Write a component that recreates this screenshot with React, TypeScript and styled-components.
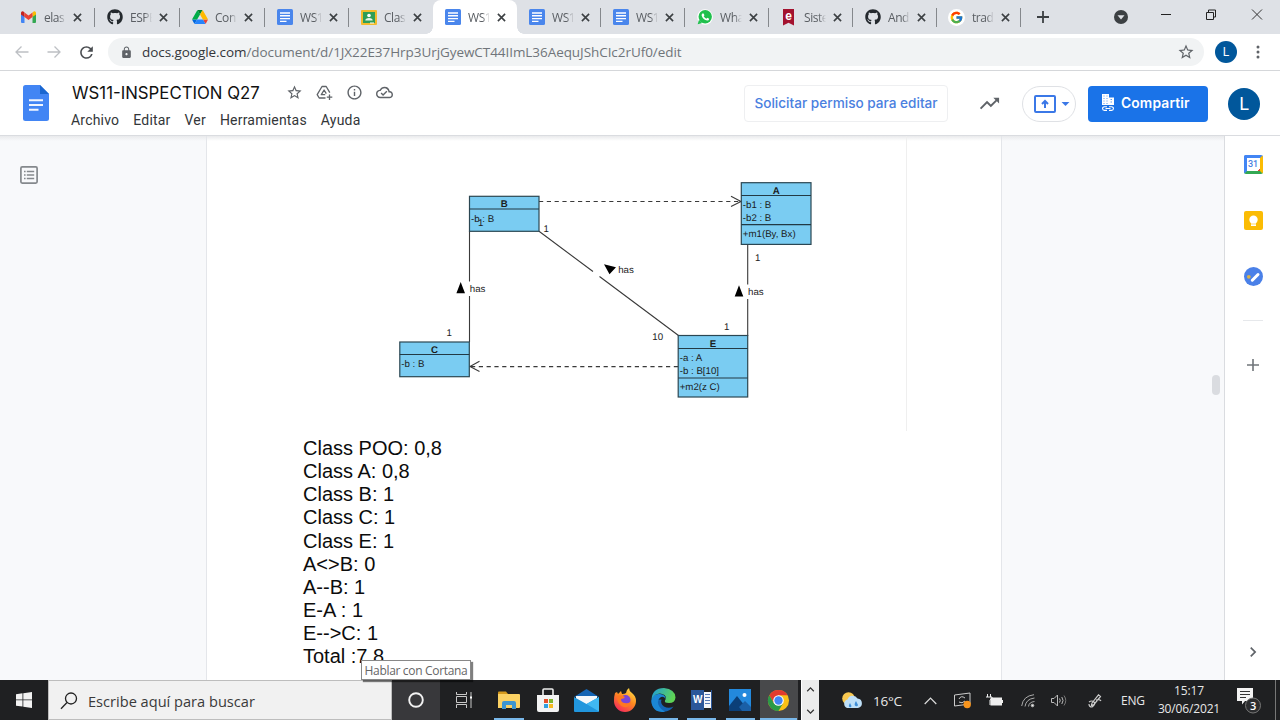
import React from "react";
import styled, { createGlobalStyle } from "styled-components";
import {
  MdLock, MdRefresh, MdStarBorder, MdInfoOutline, MdTrendingUp,
  MdArrowDropDown, MdOutlineCloudDone,
  MdChevronRight, MdKeyboardArrowUp, MdKeyboardArrowDown,
} from "react-icons/md";
import { FaGithub } from "react-icons/fa";
import { FcGoogle } from "react-icons/fc";

const Global = createGlobalStyle`
  * { box-sizing: border-box; }
  html, body { margin: 0; padding: 0; background: #fff; overflow: hidden; }
  svg { display: block; flex: none; }
`;

const SEGOE = `"Open Sans", "Noto Sans", sans-serif`;
const GOOGLE = `Inter, Roboto, sans-serif`;

const Screen = styled.div`
  width: 1280px;
  height: 720px;
  display: flex;
  flex-direction: column;
  overflow: hidden;
  font-family: ${SEGOE};
`;

/* ---------- tab strip ---------- */
const TabStrip = styled.div`
  height: 34px;
  flex: none;
  display: flex;
  align-items: stretch;
  padding-left: 9px;
  background: #dee1e6;
`;

const TabItem = styled.div<{ $w: number; $active?: boolean; $line?: boolean }>`
  width: ${(p) => p.$w}px;
  display: flex;
  align-items: center;
  padding-left: 11px;
  position: relative;
  background: ${(p) => (p.$active ? "#fff" : "transparent")};
  border-radius: 8px 8px 0 0;
  &::after {
    content: "";
    position: absolute;
    right: 0;
    top: 8px;
    width: 1px;
    height: 19px;
    background: ${(p) => (p.$line ? "#85888c" : "transparent")};
  }
`;

const TabFoot = styled.i<{ $side: "left" | "right" }>`
  position: absolute;
  bottom: 0;
  ${(p) => p.$side}: -7px;
  width: 7px;
  height: 7px;
  background: radial-gradient(
    circle at ${(p) => (p.$side === "left" ? "0 0" : "100% 0")},
    transparent 6.5px,
    #fff 7px
  );
`;

const TabIcon = styled.span`
  width: 17px;
  height: 17px;
  display: flex;
  align-items: center;
  justify-content: center;
`;

const TabLabel = styled.span`
  width: 22px;
  margin-left: 7px;
  overflow: hidden;
  white-space: nowrap;
  font-size: 12px;
  line-height: 17px;
  letter-spacing: -0.45px;
  color: #5a5e63;
  mask-image: linear-gradient(90deg, #000 65%, transparent 100%);
`;

const TabClose = styled.svg`
  margin-left: 7px;
`;

const StripTools = styled.div`
  flex: 1;
  display: flex;
  align-items: flex-start;
`;

/* ---------- address bar ---------- */
const AddressRow = styled.div`
  height: 37px;
  flex: none;
  display: flex;
  align-items: center;
  padding-left: 14px;
  border-bottom: 1px solid #d5d7da;
`;

const NavButtons = styled.div`
  width: 94px;
  display: flex;
  align-items: center;
  gap: 15.5px;
`;

const Omnibox = styled.div`
  width: 1096px;
  height: 28px;
  border-radius: 14px;
  background: #f1f3f4;
  display: flex;
  align-items: center;
  padding: 0 9px 0 12px;
`;

const Url = styled.div`
  flex: 1;
  margin-left: 9px;
  font-size: 13.5px;
  line-height: 20px;
  letter-spacing: -0.06px;
  color: #70757a;
  b { font-weight: 400; color: #33363a; }
`;

const Avatar = styled.div<{ $size: number; $font: number; $ml: number }>`
  width: ${(p) => p.$size}px;
  height: ${(p) => p.$size}px;
  margin-left: ${(p) => p.$ml}px;
  border-radius: 50%;
  background: #01579b;
  color: #fff;
  font: 400 ${(p) => p.$font}px/${(p) => p.$size}px Roboto, sans-serif;
  text-align: center;
`;

/* ---------- docs header ---------- */
const DocsHeader = styled.header`
  height: 65px;
  flex: none;
  display: flex;
  padding-left: 23px;
  border-bottom: 1px solid #dadce0;
`;

const DocsLogo = styled.svg`
  margin-top: 14px;
`;

const TitleBlock = styled.div`
  width: 673px;
  margin-left: 22px;
  padding-top: 10px;
`;

const TitleRow = styled.div`
  display: flex;
  align-items: center;
  height: 24px;
`;

const DocTitle = styled.div`
  width: 215px;
  padding-left: 1px;
  font: 400 16.8px/24px ${GOOGLE};
  white-space: nowrap;
  color: #111;
`;

const TitleIcons = styled.div`
  display: flex;
  gap: 13px;
  margin-bottom: 2px;
  color: #5f6368;
`;

const MenuRow = styled.nav`
  display: flex;
  gap: 14px;
  margin-top: 6px;
  font: 400 14px/18px Roboto, sans-serif;
  letter-spacing: 0.2px;
  color: #333639;
`;

const RequestButton = styled.div`
  width: 204px;
  height: 37px;
  margin-top: 14px;
  border: 1px solid #eeeff1;
  border-radius: 4px;
  font: 500 13.6px/35px ${GOOGLE};
  text-align: center;
  white-space: nowrap;
  color: #4a80e0;
`;

const HeaderActions = styled.div`
  flex: 1;
  display: flex;
  align-items: center;
  height: 37px;
  margin-top: 14px;
  padding-left: 30px;
`;

const PresentButton = styled.div`
  width: 54px;
  height: 36px;
  margin-left: 21px;
  border: 1px solid #dfe1e5;
  border-radius: 18px;
  display: flex;
  align-items: center;
  padding-left: 11px;
  color: #3b78e7;
`;

const ShareButton = styled.div`
  width: 120px;
  height: 36px;
  margin-left: 12px;
  border-radius: 4px;
  background: #1a73e8;
  color: #fff;
  display: flex;
  align-items: center;
  padding: 0 0 1px 13px;
  gap: 6px;
  font: 600 13.8px/20px ${GOOGLE};
  letter-spacing: 0.15px;
  white-space: nowrap;
`;

/* ---------- workspace ---------- */
const Workspace = styled.main`
  flex: 1;
  min-height: 0;
  display: flex;
  background: #f8f9fb;
`;

const HEADER_SHADE = "linear-gradient(#e9eaec, rgba(240, 241, 243, 0)) top / 100% 5px no-repeat";

const OutlineGutter = styled.div`
  width: 206px;
  padding: 30px 0 0 20px;
  background: ${HEADER_SHADE};
`;

const Page = styled.article`
  width: 796px;
  background: ${HEADER_SHADE}, #fff;
  border: solid #e4e6ea;
  border-width: 0 1px;
  overflow: hidden;
`;

const Figure = styled.div`
  width: 700px;
  height: 295px;
  border-right: 1px solid #efefef;
`;

const Notes = styled.div`
  padding: 6.3px 0 0 96px;
  font: 400 20px/23.07px "Liberation Sans", Arial, sans-serif;
  color: #0c0c0c;
`;

const ScrollGutter = styled.div`
  flex: 1;
  display: flex;
  justify-content: flex-end;
  padding: 239px 4px 0 0;
  background: ${HEADER_SHADE};
`;

const Thumb = styled.div`
  width: 8px;
  height: 20px;
  border-radius: 4px;
  background: #dadce0;
`;

const SidePanel = styled.aside`
  width: 56px;
  border-left: 1px solid #dadce0;
  background: #fff;
  display: flex;
  flex-direction: column;
  align-items: center;
  padding: 18px 0 0 1px;
`;

const PanelIcon = styled.div<{ $gap?: number; $top?: string }>`
  height: 20px;
  margin: ${(p) => p.$top || 0} 0 ${(p) => p.$gap || 0}px;
  display: flex;
  align-items: center;
`;

const PanelRule = styled.div`
  width: 20px;
  height: 1px;
  background: #e6e8eb;
`;

/* ---------- taskbar ---------- */
const Taskbar = styled.footer`
  height: 40px;
  flex: none;
  display: flex;
  background: #1f2022;
  color: #eee;
  position: relative;
`;

const StartButton = styled.div`
  width: 48px;
  display: flex;
  align-items: center;
  padding-left: 16px;
`;

const SearchBox = styled.div`
  width: 344px;
  background: #f1f1f1;
  border: 1px solid #bdbdbd;
  display: flex;
  align-items: center;
  padding: 2px 0 0 11px;
  gap: 10px;
  font-size: 14.6px;
  line-height: 20px;
  color: #3a3a3a;
`;

const CortanaButton = styled.div`
  width: 48px;
  background: #38383b;
  display: flex;
  align-items: center;
  justify-content: center;
`;

const TaskViewButton = styled.div`
  width: 50px;
  display: flex;
  align-items: center;
  justify-content: center;
  padding-right: 2px;
`;

const AppButton = styled.div<{ $on?: boolean; $bar?: number }>`
  width: 38.5px;
  display: flex;
  align-items: center;
  justify-content: center;
  background: linear-gradient(#79b8ea, #79b8ea) center bottom / ${(p) => p.$bar || 0}px 2px no-repeat
    ${(p) => (p.$on ? ", #48494b" : "")};
`;

const TaskScroll = styled.div`
  width: 18px;
  margin-left: 3px;
  background: #ececec;
  border-left: 1px solid #fff;
  color: #333;
  display: flex;
  flex-direction: column;
  align-items: center;
  justify-content: space-between;
  padding: 2px 0 1px;
`;

const Tray = styled.div`
  flex: 1;
  display: flex;
  align-items: center;
  padding-left: 23px;
  font-size: 13.5px;
  letter-spacing: -0.2px;
  color: #e8e8e8;
`;

const TrayCell = styled.div<{ $w: number; $font?: number }>`
  width: ${(p) => p.$w}px;
  flex: none;
  display: flex;
  align-items: center;
  white-space: nowrap;
  padding-top: 1px;
  ${(p) => (p.$font ? `font-size: ${p.$font}px;` : "")}
`;

const Clock = styled.div`
  width: 66px;
  flex: none;
  text-align: center;
  font-size: 12px;
  letter-spacing: -0.15px;
  line-height: 18.5px;
  white-space: nowrap;
`;

const NoticeIcon = styled.svg`
  margin-left: 14px;
`;

const ShowDesktop = styled.div`
  width: 5px;
  height: 40px;
  border-left: 1px solid #777;
  margin-left: auto;
`;

const Tooltip = styled.div`
  position: absolute;
  left: 361px;
  top: -20px;
  width: 110px;
  height: 20px;
  background: #fff;
  border: 1px solid #888;
  box-shadow: 2px 2px 1px rgba(0, 0, 0, 0.5);
  font-size: 12px;
  letter-spacing: -0.32px;
  line-height: 19px;
  text-align: center;
  white-space: nowrap;
  color: #666;
`;

/* ---------- icons ---------- */
const GmailIcon = () => (
  <svg width="15" height="12" viewBox="0 0 30 24">
    <path d="M0 4v18q0 2 2 2h5V9z" fill="#4285f4" />
    <path d="M30 4v18q0 2-2 2h-5V9z" fill="#34a853" />
    <path d="M23 3v9l7-5V3.500q0-3.500-4-3z" fill="#fbbc04" />
    <path d="M7 3v9L0 7V3.500Q0 0 4 .5z" fill="#c5221f" />
    <path d="M7 3l8 6 8-6v9l-8 6-8-6z" fill="#ea4335" />
  </svg>
);

const DriveIcon = () => (
  <svg width="16" height="14" viewBox="0 0 87 78">
    <path d="M6.600 66.850l3.850 6.650c.8 1.400 1.950 2.500 3.300 3.300l13.750-23.800H0c0 1.550.4 3.100 1.200 4.500z" fill="#0066da" />
    <path d="M43.650 25L29.900 1.200c-1.350.8-2.500 1.900-3.300 3.300L1.200 48.500A9 9 0 000 53h27.500z" fill="#00ac47" />
    <path d="M73.550 76.800c1.350-.8 2.500-1.900 3.300-3.300l9.250-16c.8-1.400 1.200-2.950 1.200-4.500H59.800l5.850 11.500z" fill="#ea4335" />
    <path d="M43.650 25L57.400 1.200C56.050.4 54.500 0 52.900 0H34.400c-1.600 0-3.150.45-4.500 1.200z" fill="#00832d" />
    <path d="M59.800 53H27.500L13.750 76.800c1.350.8 2.900 1.200 4.500 1.200h50.800c1.600 0 3.150-.45 4.500-1.200z" fill="#2684fc" />
    <path d="M73.400 26.500l-12.700-22c-.8-1.400-1.950-2.500-3.300-3.300L43.650 25 59.800 53h27.450c0-1.550-.4-3.100-1.200-4.500z" fill="#ffba00" />
  </svg>
);

const DocsTabIcon = () => (
  <svg width="16" height="16" viewBox="0 0 16 16">
    <rect width="16" height="16" rx="1.500" fill="#4a86ec" />
    <path d="M3 4h10M3 6.800h10M3 9.600h10M3 12.400h6.500" stroke="#fff" strokeWidth="1.400" />
  </svg>
);

const ClassroomIcon = () => (
  <svg width="16" height="15" viewBox="0 0 16 15">
    <rect width="16" height="15" rx="1" fill="#f2bb2c" />
    <rect x="2" y="2" width="12" height="11" fill="#2f9e57" />
    <circle cx="8" cy="5.500" r="1.800" fill="#fff" />
    <path d="M4.300 10.500q0-2.500 3.700-2.500t3.700 2.500z" fill="#e8f5e9" />
    <path d="M9 12.500h4v1H9z" fill="#fff" />
  </svg>
);

const WhatsAppIcon = () => (
  <svg width="16" height="16" viewBox="0 0 16 16">
    <circle cx="8" cy="8" r="7.800" fill="#fff" />
    <circle cx="8.200" cy="7.800" r="6.700" fill="#1fc04d" />
    <path d="M.7 15.300l1.300-4.500 3.200 3.300z" fill="#1fc04d" />
    <path d="M5.300 4.500l1.300-.1.900 1.900-.8 1q1 1.800 2.700 2.500l.9-1 1.900.9q-.2 1.800-1.900 1.900Q6 11 4.600 6.600 4.500 5.300 5.300 4.500z" fill="#fff" />
  </svg>
);

const RibbonLetter = styled.span`
  width: 11px;
  height: 17px;
  background: #a3122f;
  color: #fff;
  font: 700 12px/14px "Liberation Sans", sans-serif;
  text-align: center;
  clip-path: polygon(0 0, 100% 0, 100% 100%, 50% 84%, 0 100%);
`;

const GoogleIcon = () => (
  <svg width="17" height="17" viewBox="0 0 17 17">
    <circle cx="8.500" cy="8.500" r="8.500" fill="#fff" />
    <FcGoogle x="1.500" y="1.500" size={14} />
  </svg>
);

const Close = () => (
  <TabClose width="9" height="9" viewBox="0 0 9 9">
    <path d="M.9.900l7.200 7.200M8.100.900L.9 8.100" stroke="#3c4043" strokeWidth="1.600" />
  </TabClose>
);

const ArrowIcon = ({ flip }: { flip?: boolean }) => (
  <svg width="16" height="16" viewBox="0 0 16 16" transform={flip ? "scale(-1 1)" : undefined}>
    <path d="M14.500 8H2M7.500 2.500L2 8l5.500 5.500" fill="none" stroke="#bdc0c4" strokeWidth="1.300" />
  </svg>
);

const AddShortcutIcon = () => (
  <svg width="17" height="17" viewBox="0 0 17 17" fill="none" stroke="currentColor" strokeWidth="1.300">
    <path d="M9.500 14H3.200L1.200 10.700 6 2.500h4.200l3.600 6.200" strokeLinejoin="round" />
    <path d="M9.200 10.700H5.300L8.100 6l2.200 3.700" strokeLinejoin="round" />
    <path d="M13.500 10.500v5.500M10.800 13.200h5.500" />
  </svg>
);

const OutlineIcon = () => (
  <svg width="18" height="18" viewBox="0 0 18 18" fill="none" stroke="#85898d">
    <rect x=".9" y=".9" width="16.200" height="16.200" rx="1.300" strokeWidth="1.700" />
    <path d="M4 5.500h1.600M4 9h1.600M4 12.500h1.600M6.800 5.500h7.400M6.800 9h7.400M6.800 12.500h7.400" strokeWidth="1.500" />
  </svg>
);

const BuildingIcon = () => (
  <svg width="14" height="18" viewBox="0 0 14 18">
    <path d="M1 0h7v3.500h5V11H1z" fill="#fff" />
    <path d="M2.500 2h1M5.500 2h1M2.500 4.500h1M5.500 4.500h1M2.500 7h1M5.500 7h1M9.500 5.500h1.500M9.500 8h1.500M2.500 9.500h1M5.500 9.500h1" stroke="#1a73e8" strokeWidth=".7" />
    <path d="M6 12.700H3.400a1.800 1.800 0 000 3.700H6M8 12.700h2.600a1.800 1.800 0 010 3.700H8M4.500 14.500h5" fill="none" stroke="#fff" strokeWidth="1.100" />
  </svg>
);

const ChromeIcon = () => (
  <svg width="23" height="23" viewBox="0 0 48 48">
    <circle cx="24" cy="24" r="22" fill="#fbc116" />
    <path d="M24 13h19.100A22 22 0 004.900 13L14.500 29.500z" fill="#e33b2e" />
    <path d="M33.500 29.500L24 46A22 22 0 014.900 13l9.600 16.500z" fill="#2a9a48" />
    <circle cx="24" cy="24" r="11" fill="#fff" />
    <circle cx="24" cy="24" r="8.700" fill="#4285f4" />
  </svg>
);

const ExplorerIcon = () => (
  <svg width="22" height="19" viewBox="0 0 22 19">
    <path d="M0 1.500Q0 .5 1 .5h7l2 2.500H0z" fill="#d69a1c" />
    <path d="M0 3h21q1 0 1 1v12q0 1-1 1H0z" fill="#fbd163" />
    <path d="M4 18v-6q0-2 2-2h10q2 0 2 2v6h-4v-4H8v4z" fill="#3d95d0" />
  </svg>
);

const StoreIcon = () => (
  <svg width="24" height="24" viewBox="0 0 24 24">
    <path d="M7 7V2q0-1 1-1h8q1 0 1 1v5" fill="none" stroke="#eee" strokeWidth="1.600" />
    <path d="M1 7h22v15q0 2-2 2H3q-2 0-2-2z" fill="#f3f3f3" />
    <path d="M8 11h4v4H8z" fill="#e8502a" /><path d="M13 11h4v4h-4z" fill="#7db72f" />
    <path d="M8 16h4v4H8z" fill="#2f9fe0" /><path d="M13 16h4v4h-4z" fill="#f5b921" />
  </svg>
);

const MailIcon = () => (
  <svg width="25" height="23" viewBox="0 0 25 23">
    <path d="M0 8L12.500 0 25 8z" fill="#1464b4" />
    <path d="M2 7h21v12H2z" fill="#f4f7fa" />
    <path d="M0 8l12.500 7L25 8v14q0 1-1 1H1q-1 0-1-1z" fill="#2196dd" />
    <path d="M25 8v14.500L12.500 15z" fill="#40b8f2" />
  </svg>
);

const FirefoxIcon = () => (
  <svg width="24" height="24" viewBox="0 0 24 24">
    <defs>
      <linearGradient id="ff" x1=".8" y1="0" x2=".2" y2="1">
        <stop offset="0" stopColor="#ffe14a" /><stop offset=".45" stopColor="#ff8a1f" /><stop offset="1" stopColor="#f4235f" />
      </linearGradient>
    </defs>
    <path d="M2 5l2-1 1 2 3-3 1 3q3 0 4-1 0-3 3-5 0 3 3 5 4 3 4 8a11 11 0 01-22 0q0-5 1-8z" fill="url(#ff)" />
    <circle cx="12.500" cy="12" r="5" fill="#7a45d8" />
    <path d="M4 8q4-2 8 1-1 2-4 2 0 4 4 4 4 1 6-2-1 7-7 6-7-2-7-11z" fill="#ff7722" />
  </svg>
);

const EdgeIcon = () => (
  <svg width="25" height="24" viewBox="0 0 25 24">
    <defs>
      <linearGradient id="edgeTop" x1="0" y1="0" x2="1" y2=".3">
        <stop offset="0" stopColor="#1c9be0" /><stop offset="1" stopColor="#5fd455" />
      </linearGradient>
    </defs>
    <path d="M.5 12Q0 17 4 21q4 3 9 2.800 6-.3 9.500-5.300-5 2.500-9.500 0-4-3-2.500-7z" fill="#1465b4" />
    <path d="M.5 12Q2 5 9 6q6 1 5.500 5Q13 8 10 9q-5 3-2 9 2 4 6 5.700Q5 25 2 19 0 16 .5 12z" fill="#1b87d6" />
    <path d="M.5 12Q1 0 13 0q11 1 11.500 9.500Q24 15 18 15q-5 0-4-2.500 2-3-.5-5.500Q9 4 4 7q-2.500 2-3.500 5z" fill="url(#edgeTop)" />
  </svg>
);

const WordGlyph = styled.span`
  width: 21px;
  height: 20px;
  display: flex;
  align-items: center;
  background: linear-gradient(90deg, transparent 12px, #f3f5fa 12px) center / 100% 16px no-repeat;
  border-right: 1px solid #2b579a;
`;

const WordLetter = styled.span`
  width: 13px;
  height: 20px;
  background: #2b579a;
  color: #fff;
  font: 700 10px/20px "Liberation Sans", sans-serif;
  letter-spacing: 0;
  text-align: center;
`;

const WordLines = styled.span`
  width: 5px;
  height: 12px;
  margin-left: 1px;
  background: repeating-linear-gradient(#5377b5 0 1px, transparent 1px 3px);
`;

const PhotosIcon = () => (
  <svg width="22" height="22" viewBox="0 0 22 22">
    <path d="M0 0h22v22H0z" fill="#2389dd" />
    <path d="M0 17L8 7l12 15H0z" fill="#0b3f78" />
    <path d="M10 18l6-6 6 6v4H13z" fill="#1a5fa6" />
    <circle cx="15.500" cy="6" r="2" fill="#fff" />
  </svg>
);

const CalendarBox = styled.span`
  width: 19px;
  height: 19px;
  border: 3px solid;
  border-color: #4285f4 #fbbc04 #34a853 #4285f4;
  border-radius: 2px;
  background: linear-gradient(135deg, transparent 92%, #ea4335 92%), #fff;
  color: #4a80e0;
  font: 500 9px/13px Roboto, sans-serif;
  text-align: center;
`;

const KeepIcon = () => (
  <svg width="19" height="19" viewBox="0 0 19 19">
    <rect width="19" height="19" rx="2" fill="#fbbc04" />
    <circle cx="9.500" cy="8.700" r="4.200" fill="#fff" />
    <path d="M7 12h5v3H7z" fill="#fff" />
    <path d="M7 13h5" stroke="#fbbc04" strokeWidth=".6" />
  </svg>
);

const TasksIcon = () => (
  <svg width="19" height="19" viewBox="0 0 19 19">
    <circle cx="9.500" cy="9.500" r="9.500" fill="#4a80e8" />
    <path d="M8.300 13.200l5.700-5.700" stroke="#fff" strokeWidth="3" strokeLinecap="round" />
    <circle cx="4.800" cy="9.800" r="1.900" fill="#d9b24a" />
  </svg>
);

const WeatherIcon = () => (
  <svg width="21" height="18" viewBox="0 0 21 18">
    <circle cx="6.500" cy="6.500" r="6.300" fill="#f8c850" />
    <path d="M5 16a4.500 4.500 0 01.5-8.500 5.500 5.500 0 0110-1A4.800 4.800 0 0116 16z" fill="#bfe0f8" />
    <path d="M8 11q-2 3-.5 4T9.500 14zM14 9q-2.500 4-.5 5t2.500-1z" fill="#3f8fd8" />
  </svg>
);

/* ---------- class diagram ---------- */
const DiagramSvg = styled.svg`
  font-family: "Liberation Sans", Arial, sans-serif;
  font-size: 9.7px;
  text-rendering: geometricPrecision;
  fill: #1c1c1c;
`;

type Box = { x: number; y: number; w: number; h: number; name: string; rules: number[]; rows: [number, string][] };

const boxes: Box[] = [
  { x: 469.5, y: 196.3, w: 69.500, h: 35, name: "B", rules: [209], rows: [[221.500, "-b : B"]] },
  { x: 399.800, y: 342, w: 69.500, h: 34.700, name: "C", rules: [354.500], rows: [[367, "-b : B"]] },
  { x: 741.300, y: 182.700, w: 69.700, h: 61.700, name: "A", rules: [195.500, 224.600], rows: [[207.500, "-b1 : B"], [220.700, "-b2 : B"], [237.300, "+m1(By, Bx)"]] },
  { x: 678.200, y: 335.500, w: 69.500, h: 61.500, name: "E", rules: [348.500, 378], rows: [[360.700, "-a : A"], [373.500, "-b : B[10]"], [390, "+m2(z C)"]] },
];

const labels: [number, number, string][] = [
  [543.5, 231.5, "1"], [478, 226, "1"], [446.500, 336, "1"], [755, 260.500, "1"], [724, 329.500, "1"],
  [652.300, 340, "10"], [618.200, 272.700, "has"], [469.800, 292.300, "has"], [748, 295.300, "has"],
];

const Diagram = () => (
  <DiagramSvg width="699" height="295" viewBox="207 136 699 295">
    <g stroke="#3a3a3a" strokeWidth="1.100" fill="none">
      <path d="M469.500 231v50.500M469.500 296v46M747.700 245v39.500M747.700 299v37M539 231.300l54 40.200M599.500 276.500l79 59" />
      <path d="M539 201.500h201M678 366.600H471" strokeDasharray="4.200 3.600" />
      <path d="M731 196.300l10 5.200-10 5M479.500 361.300l-9.500 5.300 9.500 5" />
    </g>
    <path d="M460.700 282l4.300 11.200h-8.600zM739 285.300l4.300 11.200h-8.600zM604 264.300l12 3-6.500 7z" fill="#000" />
    {boxes.map((b) => (
      <g key={b.name}>
        <rect x={b.x} y={b.y} width={b.w} height={b.h} fill="#7accf2" stroke="#2b4652" strokeWidth="1.200" />
        {b.rules.map((r) => (
          <path key={r} d={`M${b.x} ${r}h${b.w}`} stroke="#223944" strokeWidth="1.200" />
        ))}
        <text x={b.x + b.w / 2} y={b.rules[0] - 2} textAnchor="middle" fontWeight="700">{b.name}</text>
        {b.rows.map(([y, t]) => (
          <text key={t} x={b.x + 1.5} y={y}>{t}</text>
        ))}
      </g>
    ))}
    {labels.map(([x, y, t]) => (
      <text key={`${x}`} x={x} y={y}>{t}</text>
    ))}
  </DiagramSvg>
);

/* ---------- data ---------- */
type TabData = { w: number; label: string; icon: React.ReactNode; active?: boolean; line?: boolean };

const tabs: TabData[] = [
  { w: 86, label: "elas", icon: <GmailIcon />, line: true },
  { w: 85, label: "ESPE", icon: <FaGithub size={16} color="#24292e" />, line: true },
  { w: 85, label: "Con", icon: <DriveIcon />, line: true },
  { w: 84, label: "WS1", icon: <DocsTabIcon />, line: true },
  { w: 84, label: "Clas", icon: <ClassroomIcon /> },
  { w: 84, label: "WS1", icon: <DocsTabIcon />, active: true },
  { w: 84, label: "WS1", icon: <DocsTabIcon />, line: true },
  { w: 84, label: "WS1", icon: <DocsTabIcon />, line: true },
  { w: 84, label: "Wha", icon: <WhatsAppIcon />, line: true },
  { w: 84, label: "Siste", icon: <RibbonLetter>e</RibbonLetter>, line: true },
  { w: 84, label: "And", icon: <FaGithub size={16} color="#24292e" />, line: true },
  { w: 84, label: "trad", icon: <GoogleIcon />, line: true },
];

const notes = [
  "Class POO: 0,8", "Class A: 0,8", "Class B: 1", "Class C: 1", "Class E: 1",
  "A<>B: 0", "A--B: 1", "E-A : 1", "E-->C: 1", "Total :7,8",
];

export default function App() {
  return (
    <Screen>
      <Global />
      <TabStrip>
        {tabs.map((t, i) => (
          <TabItem key={i} $w={t.w} $active={t.active} $line={t.line}>
            {t.active && <TabFoot $side="left" />}
            <TabIcon>{t.icon}</TabIcon>
            <TabLabel>{t.label}</TabLabel>
            <Close />
            {t.active && <TabFoot $side="right" />}
          </TabItem>
        ))}
        <StripTools>
          <svg width="259" height="34" viewBox="1021 0 259 34" fill="none">
            <path d="M1037 17h12M1043 11v12" stroke="#3c4043" strokeWidth="1.800" />
            <circle cx="1121" cy="17" r="7" fill="#3c4043" />
            <path d="M1117.500 15.300h7l-3.500 4.200z" fill="#dee1e6" />
            <path d="M1161 14.500h10" stroke="#222" />
            <path d="M1206.500 12.500h7v7h-7zM1208.500 12.500v-2.500h7v7h-2" stroke="#222" />
            <path d="M1252 9.500l10 10M1262 9.500l-10 10" stroke="#333" />
          </svg>
        </StripTools>
      </TabStrip>

      <AddressRow>
        <NavButtons>
          <ArrowIcon />
          <ArrowIcon flip />
          <MdRefresh size={19} color="#4a4d51" />
        </NavButtons>
        <Omnibox>
          <MdLock size={13} color="#5f6368" />
          <Url><b>docs.google.com</b>/document/d/1JX22E37Hrp3UrjGyewCT44IImL36AequJShCIc2rUf0/edit</Url>
          <MdStarBorder size={18} color="#5f6368" />
        </Omnibox>
        <Avatar $size={22} $font={12} $ml={11}>L</Avatar>
        <svg width="40" height="16" viewBox="0 0 40 16" fill="#5f6368">
          <circle cx="21" cy="3" r="1.500" /><circle cx="21" cy="8" r="1.500" /><circle cx="21" cy="13" r="1.500" />
        </svg>
      </AddressRow>

      <DocsHeader>
        <DocsLogo width="26" height="36" viewBox="0 0 26 36">
          <path d="M2.500 0H17l9 9v24.500q0 2.500-2.500 2.500h-21Q0 36 0 33.500v-31Q0 0 2.500 0z" fill="#4285f4" />
          <path d="M17 0l9 9h-9z" fill="#1a66d0" />
          <path d="M6 15.200h14M6 20h14M6 24.800h9.500" stroke="#f1f5fe" strokeWidth="1.900" />
        </DocsLogo>
        <TitleBlock>
          <TitleRow>
            <DocTitle>WS11-INSPECTION Q27</DocTitle>
            <TitleIcons>
              <MdStarBorder size={17} />
              <AddShortcutIcon />
              <MdInfoOutline size={17} />
              <MdOutlineCloudDone size={17} />
            </TitleIcons>
          </TitleRow>
          <MenuRow>
            <span>Archivo</span><span>Editar</span><span>Ver</span><span>Herramientas</span><span>Ayuda</span>
          </MenuRow>
        </TitleBlock>
        <RequestButton>Solicitar permiso para editar</RequestButton>
        <HeaderActions>
          <MdTrendingUp size={23} color="#5f6368" />
          <PresentButton>
            <svg width="22" height="18" viewBox="0 0 22 18" fill="none" stroke="currentColor" strokeWidth="2">
              <rect x="1" y="1" width="20" height="16" rx="1" />
              <path d="M11 13V6M8 9l3-3 3 3" />
            </svg>
            <MdArrowDropDown size={19} />
          </PresentButton>
          <ShareButton><BuildingIcon />Compartir</ShareButton>
          <Avatar $size={32} $font={18} $ml={20}>L</Avatar>
        </HeaderActions>
      </DocsHeader>

      <Workspace>
        <OutlineGutter><OutlineIcon /></OutlineGutter>
        <Page>
          <Figure><Diagram /></Figure>
          <Notes>{notes.map((n) => <div key={n}>{n}</div>)}</Notes>
        </Page>
        <ScrollGutter><Thumb /></ScrollGutter>
        <SidePanel>
          <PanelIcon $gap={36}><CalendarBox>31</CalendarBox></PanelIcon>
          <PanelIcon $gap={36}><KeepIcon /></PanelIcon>
          <PanelIcon $gap={34}><TasksIcon /></PanelIcon>
          <PanelRule />
          <PanelIcon $top="34px">
            <svg width="12" height="12" viewBox="0 0 12 12"><path d="M0 6h12M6 0v12" stroke="#70757a" strokeWidth="1.600" /></svg>
          </PanelIcon>
          <PanelIcon $top="auto" $gap={18}><MdChevronRight size={20} color="#5f6368" /></PanelIcon>
        </SidePanel>
      </Workspace>

      <Taskbar>
        <StartButton>
          <svg width="16" height="16" viewBox="0 0 16 16" fill="#f2f2f2">
            <path d="M0 2.200L6.500 1.300v6.200H0zM7.300 1.200L16 0v7.500H7.300zM0 8.300h6.500v6.200L0 13.700zM7.300 8.300H16V16l-8.700-1.300z" />
          </svg>
        </StartButton>
        <SearchBox>
          <svg width="18" height="18" viewBox="0 0 18 18" fill="none" stroke="#222" strokeWidth="1.300">
            <circle cx="11" cy="6.500" r="5.500" /><path d="M7 10.500l-6 6.300" />
          </svg>
          Escribe aquí para buscar
        </SearchBox>
        <CortanaButton>
          <svg width="16" height="16" viewBox="0 0 16 16"><circle cx="8" cy="8" r="6.800" fill="none" stroke="#f2f2f2" strokeWidth="1.900" /></svg>
        </CortanaButton>
        <TaskViewButton>
          <svg width="16" height="16" viewBox="0 0 16 16" fill="none" stroke="#c8c8c8">
            <path d="M.5 0v2.500h10V0M.5 4.500h10v6H.5zM.5 16v-3.500h10V16M15 0v16" />
            <path d="M14 5.500h2" stroke="#fff" strokeWidth="2" />
          </svg>
        </TaskViewButton>
        <AppButton $bar={30}><ExplorerIcon /></AppButton>
        <AppButton><StoreIcon /></AppButton>
        <AppButton><MailIcon /></AppButton>
        <AppButton><FirefoxIcon /></AppButton>
        <AppButton $bar={29}><EdgeIcon /></AppButton>
        <AppButton $bar={29}><WordGlyph><WordLetter>W</WordLetter><WordLines /></WordGlyph></AppButton>
        <AppButton $bar={29}><PhotosIcon /></AppButton>
        <AppButton $on $bar={37}><ChromeIcon /></AppButton>
        <TaskScroll><MdKeyboardArrowUp size={15} /><MdKeyboardArrowDown size={15} /></TaskScroll>
        <Tray>
          <TrayCell $w={31}><WeatherIcon /></TrayCell>
          <TrayCell $w={51}>16°C</TrayCell>
          <TrayCell $w={30}>
            <svg width="13" height="8" viewBox="0 0 13 8"><path d="M.7 7l5.800-6 5.800 6" fill="none" stroke="#ddd" strokeWidth="1.200" /></svg>
          </TrayCell>
          <TrayCell $w={32}>
            <svg width="18" height="17" viewBox="0 0 18 17" fill="none" stroke="#ccc">
              <path d="M.5 3L16 1v11L.5 14z" /><path d="M5 7q2-4 6-1M11 9q-3 3-6 1" />
              <circle cx="13.200" cy="12.500" r="3.700" fill="#f7941d" stroke="none" />
            </svg>
          </TrayCell>
          <TrayCell $w={35}>
            <svg width="17" height="13" viewBox="0 0 17 13" fill="none" stroke="#eee">
              <path d="M1.500 0v3M4.500 0v3M0 3h6v1.500L4 6v5" /><rect x="5" y="4" width="10.500" height="7" fill="#eee" /><path d="M16.500 6v3" />
            </svg>
          </TrayCell>
          <TrayCell $w={30}>
            <svg width="15" height="14" viewBox="0 0 15 14" fill="none" stroke="#aaa">
              <path d="M.7 12Q2 2 13 .7M4 12.500Q5 5 13.500 4M7.500 12.500Q8 8 13.500 7.500" /><circle cx="11.500" cy="11.500" r="1.300" fill="#eee" />
            </svg>
          </TrayCell>
          <TrayCell $w={37}>
            <svg width="16" height="13" viewBox="0 0 16 13" fill="none" stroke="#bbb">
              <path d="M.5 4.500h2.500L6.500 1v11L3 8.500H.5zM8.500 4.500q1.500 2 0 4M10.800 3q2.500 3.500 0 7" /><path d="M13 1.500q3.500 5 0 10" stroke="#777" />
            </svg>
          </TrayCell>
          <TrayCell $w={33}>
            <svg width="14" height="14" viewBox="0 0 14 14" fill="none" stroke="#ccc" strokeWidth="1.200">
              <path d="M4 9L10.500.8l2 1.700L6 10.500l-2.500 1zM1 8q3-2 5 0t-2 5q-3 0-3-3M8 6q4-1 5 1" />
            </svg>
          </TrayCell>
          <TrayCell $w={35} $font={12}>ENG</TrayCell>
          <Clock>15:17<br />30/06/2021</Clock>
          <NoticeIcon width="26" height="28" viewBox="0 0 26 28">
            <path d="M1 2h16v13H9l-3 3.500V15H1z" fill="#f4f4f4" />
            <path d="M4 5.500h10M4 8.500h10M4 11.500h6" stroke="#333" />
            <circle cx="17" cy="19.500" r="7.500" fill="#2c2d2f" stroke="#777" />
            <text x="17" y="23.500" textAnchor="middle" fontSize="11" fontWeight="600" fill="#fff" fontFamily="Open Sans, sans-serif">3</text>
          </NoticeIcon>
          <ShowDesktop />
        </Tray>
        <Tooltip>Hablar con Cortana</Tooltip>
      </Taskbar>
    </Screen>
  );
}
